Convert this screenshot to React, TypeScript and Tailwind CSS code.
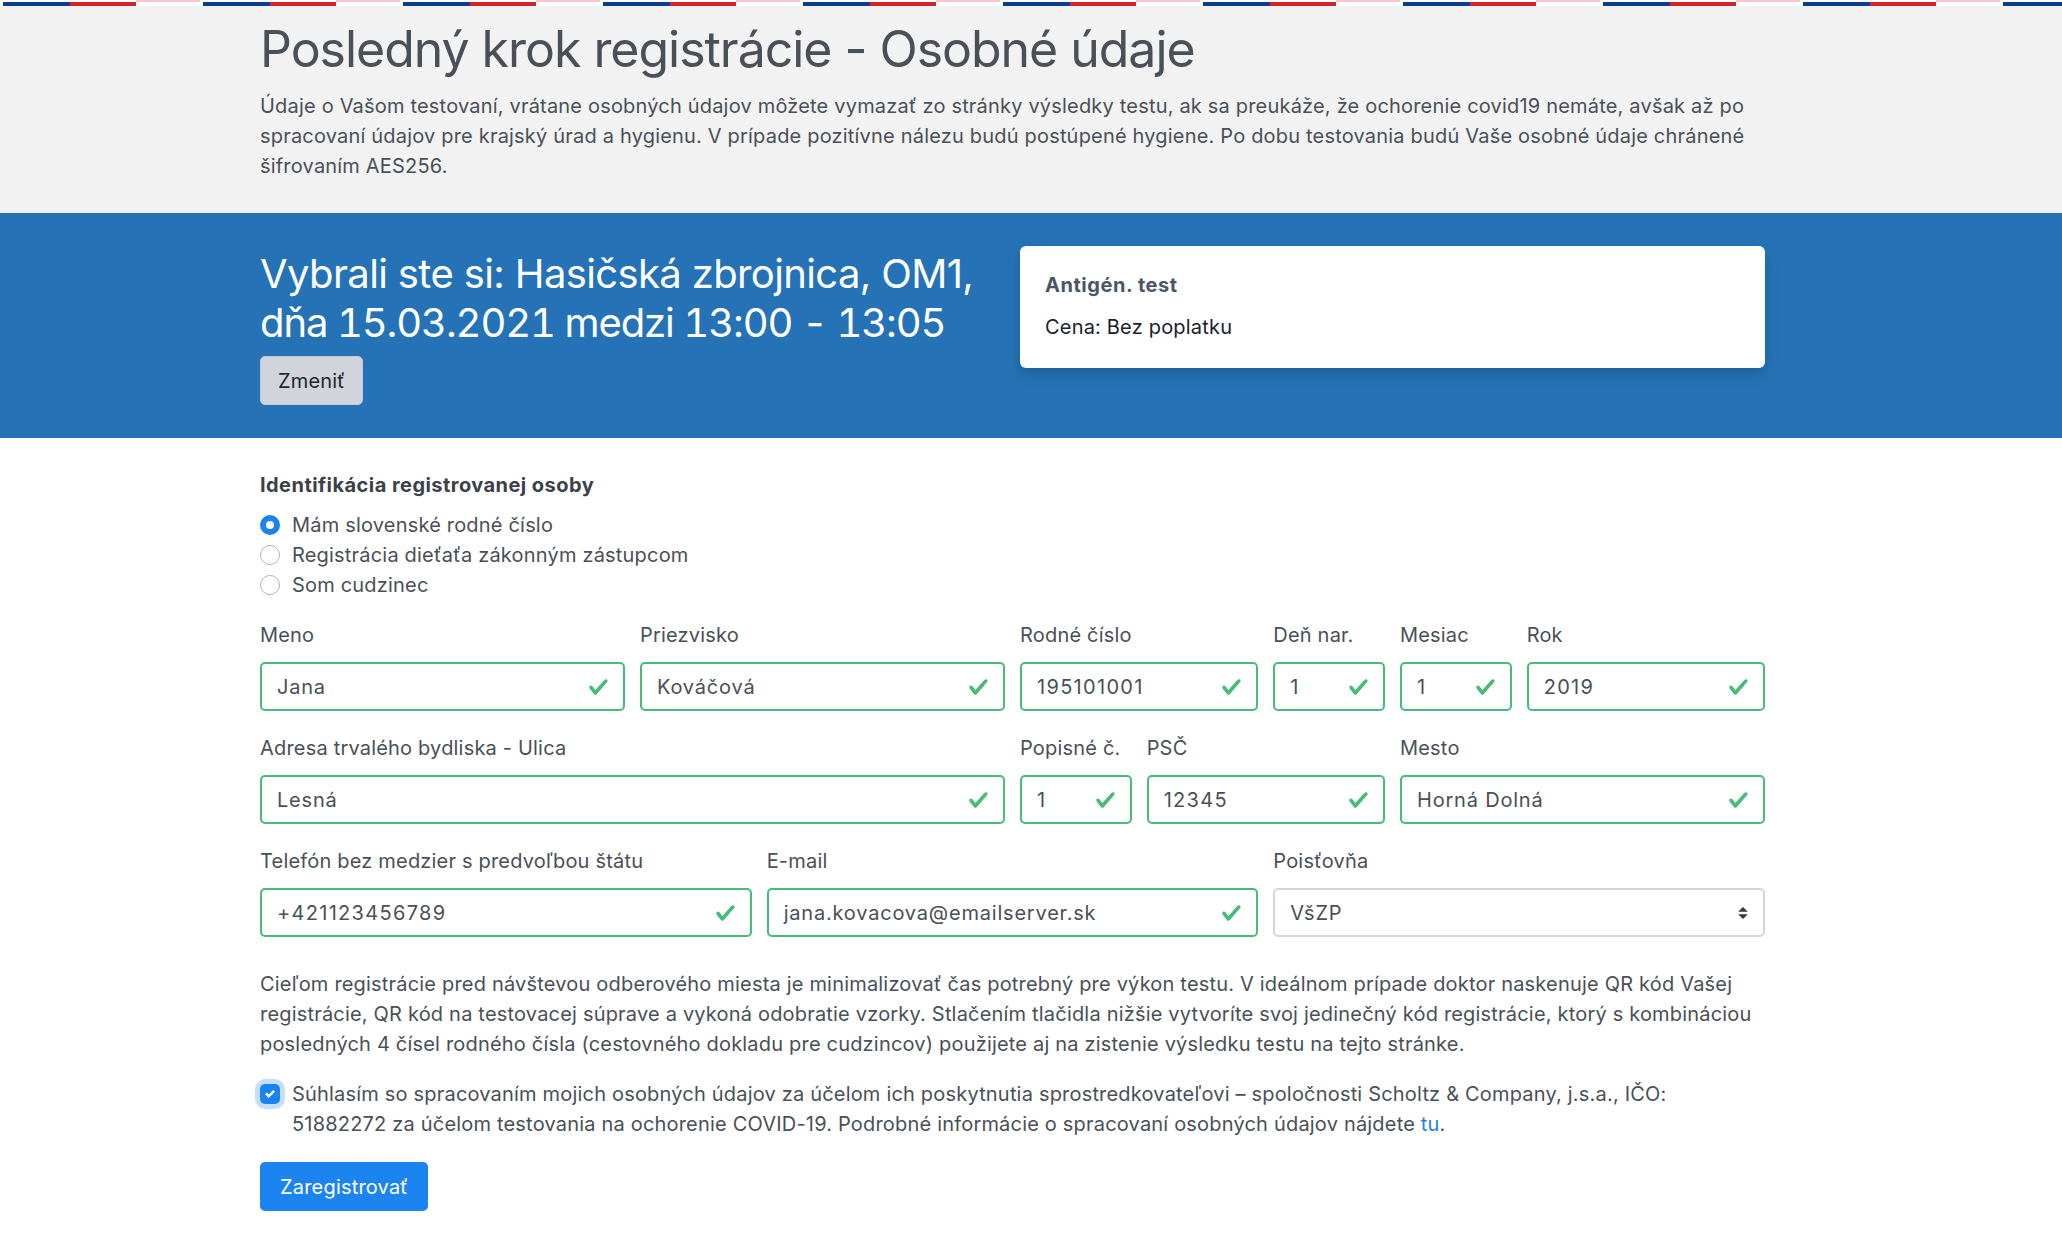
import React from "react";

function Check() {
  return (
    <svg viewBox="0 0 8 8" className="absolute right-[14px] top-1/2 -translate-y-1/2 w-[21px] h-[21px]">
      <path
        fill="#48bb78"
        d="M2.3 6.73L.6 4.53c-.4-1.04.46-1.4 1.1-.8l1.1 1.4 3.4-3.8c.6-.63 1.6-.27 1.2.7l-4 4.6c-.43.5-.8.4-1.1.1z"
      />
    </svg>
  );
}

function Field({ label, value, span, num }: { label: string; value: string; span: string; num?: boolean }) {
  return (
    <div className={span}>
      <div className="leading-[30px] mb-[12px] whitespace-nowrap">{label}</div>
      <div
        className={
          num
            ? "relative h-[49px] border-2 border-[#48bb78] rounded-[5px] bg-white flex items-center pl-[15px] text-[#495057] tracking-[1.3px]"
            : "relative h-[49px] border-2 border-[#48bb78] rounded-[5px] bg-white flex items-center pl-[15px] text-[#495057] tracking-[0.8px]"
        }
      >
        {value}
        <Check />
      </div>
    </div>
  );
}

function Radio({ label, checked }: { label: string; checked?: boolean }) {
  return (
    <div className="flex items-center h-[30px]">
      {checked ? (
        <span className="w-[20px] h-[20px] rounded-full bg-[#1b82f1] flex items-center justify-center mr-[12px] shrink-0">
          <span className="w-[8px] h-[8px] rounded-full bg-white" />
        </span>
      ) : (
        <span className="w-[20px] h-[20px] rounded-full border border-[#adb5bd] bg-white mr-[12px] shrink-0" />
      )}
      <span>{label}</span>
    </div>
  );
}

export default function App() {
  return (
    <div className="font-['Inter','Liberation_Sans',sans-serif] min-h-[1252px] bg-white text-[20px] leading-[30px] tracking-[0.19px] text-[#495057]">
      <header className="bg-[#f2f2f2]">
        <div className="h-[2px] bg-[repeating-linear-gradient(90deg,#ffffff_0_136px,#f8c6cf_136px_200px)]" />
        <div className="h-[4px] bg-[repeating-linear-gradient(90deg,#ffffff_0_3px,#0e3b8c_3px_70px,#d2232a_70px_136px,#ffffff_136px_200px)]" />
        <div className="ml-[260px] w-[1505px] pt-[13px] pb-[32px]">
          <h1 className="text-[50px] leading-[60px] font-normal text-[#4a5058] tracking-[-1.03px]">
            Posledný krok registrácie - Osobné údaje
          </h1>
          <p className="mt-[12px]">
            Údaje o Vašom testovaní, vrátane osobných údajov môžete vymazať zo stránky výsledky testu, ak sa preukáže, že ochorenie covid19 nemáte, avšak až po
            <br />
            spracovaní údajov pre krajský úrad a hygienu. V prípade pozitívne nálezu budú postúpené hygiene. Po dobu testovania budú Vaše osobné údaje chránené
            <br />
            šifrovaním AES256.
          </p>
        </div>
      </header>

      <section className="bg-[#2573b6]">
        <div className="ml-[260px] w-[1505px] py-[33px] flex">
          <div className="w-[760px] shrink-0">
            <h2 className="mt-[3px] text-white text-[40px] leading-[49px] font-normal tracking-[-0.63px]">
              Vybrali ste si: Hasičská zbrojnica, OM1,
              <br />
              <span className="tabular-nums tracking-[-1.1px]">dňa 15.03.2021 medzi 13:00 - 13:05</span>
            </h2>
            <button className="mt-[9px] h-[49px] px-[17px] rounded-[5px] bg-[#d1d5db] border border-[#c4c9d0] text-[#212529] text-[20px]">
              Zmeniť
            </button>
          </div>
          <div className="flex-1">
            <div className="bg-white rounded-[6px] shadow-[0_6px_14px_rgba(0,0,0,0.18)] px-[25px] pt-[27px] pb-[26px]">
              <div className="font-bold leading-[24px] text-[#4a5568] tracking-[0.55px] mb-[15px]">Antigén. test</div>
              <div className="leading-[30px] text-[#1a202c]">Cena: Bez poplatku</div>
            </div>
          </div>
        </div>
      </section>

      <main className="ml-[260px] w-[1505px] pt-[32px] pb-[40px]">
        <div className="font-bold text-[#3b4148] tracking-[0.45px]">Identifikácia registrovanej osoby</div>
        <div className="mt-[10px] flex flex-col">
          <Radio label="Mám slovenské rodné číslo" checked />
          <Radio label="Registrácia dieťaťa zákonným zástupcom" />
          <Radio label="Som cudzinec" />
        </div>

        <div className="mt-[20px] grid grid-cols-12 gap-x-[15px] gap-y-[22px]">
          <Field span="col-span-3" label="Meno" value="Jana" />
          <Field span="col-span-3" label="Priezvisko" value="Kováčová" />
          <Field span="col-span-2" label="Rodné číslo" value="195101001" num />
          <Field span="col-span-1" label="Deň nar." value="1" num />
          <Field span="col-span-1" label="Mesiac" value="1" num />
          <Field span="col-span-2" label="Rok" value="2019" num />

          <Field span="col-span-6" label="Adresa trvalého bydliska - Ulica" value="Lesná" />
          <Field span="col-span-1" label="Popisné č." value="1" num />
          <Field span="col-span-2" label="PSČ" value="12345" num />
          <Field span="col-span-3" label="Mesto" value="Horná Dolná" />

          <Field span="col-span-4" label="Telefón bez medzier s predvoľbou štátu" value="+421123456789" num />
          <Field span="col-span-4" label="E-mail" value="jana.kovacova@emailserver.sk" />
          <div className="col-span-4">
            <div className="leading-[30px] mb-[12px]">Poisťovňa</div>
            <div className="relative h-[49px] border-2 border-[#d3d7dd] rounded-[5px] bg-white flex items-center pl-[15px] text-[#495057] tracking-[0.8px]">
              VšZP
              <svg viewBox="0 0 4 5" className="absolute right-[15px] top-1/2 -translate-y-1/2 w-[10px] h-[12px]">
                <path fill="#343a40" d="M2 0L0 2h4zm0 5L0 3h4z" />
              </svg>
            </div>
          </div>
        </div>

        <p className="mt-[32px]">
          Cieľom registrácie pred návštevou odberového miesta je minimalizovať čas potrebný pre výkon testu. V ideálnom prípade doktor naskenuje QR kód Vašej
          <br />
          registrácie, QR kód na testovacej súprave a vykoná odobratie vzorky. Stlačením tlačidla nižšie vytvoríte svoj jedinečný kód registrácie, ktorý s kombináciou
          <br />
          posledných 4 čísel rodného čísla (cestovného dokladu pre cudzincov) použijete aj na zistenie výsledku testu na tejto stránke.
        </p>

        <div className="mt-[20px] flex items-start">
          <span className="mt-[5px] w-[20px] h-[20px] rounded-[5px] bg-[#1b82f1] shadow-[0_0_0_5px_rgba(27,130,241,0.25)] flex items-center justify-center mr-[12px] shrink-0">
            <svg viewBox="0 0 8 8" className="w-[10px] h-[10px]">
              <path fill="#ffffff" d="M6.564.75l-3.59 3.612-1.538-1.55L0 4.26 2.974 7.25 8 2.193z" />
            </svg>
          </span>
          <div>
            Súhlasím so spracovaním mojich osobných údajov za účelom ich poskytnutia sprostredkovateľovi – spoločnosti Scholtz &amp; Company, j.s.a., IČO:
            <br />
            51882272 za účelom testovania na ochorenie COVID-19. Podrobné informácie o spracovaní osobných údajov nájdete{" "}
            <a className="text-[#1b82f1]">tu</a>.
          </div>
        </div>

        <button className="mt-[23px] h-[49px] px-[20px] rounded-[5px] bg-[#1b84f0] text-white text-[20px]">
          Zaregistrovať
        </button>
      </main>
    </div>
  );
}
